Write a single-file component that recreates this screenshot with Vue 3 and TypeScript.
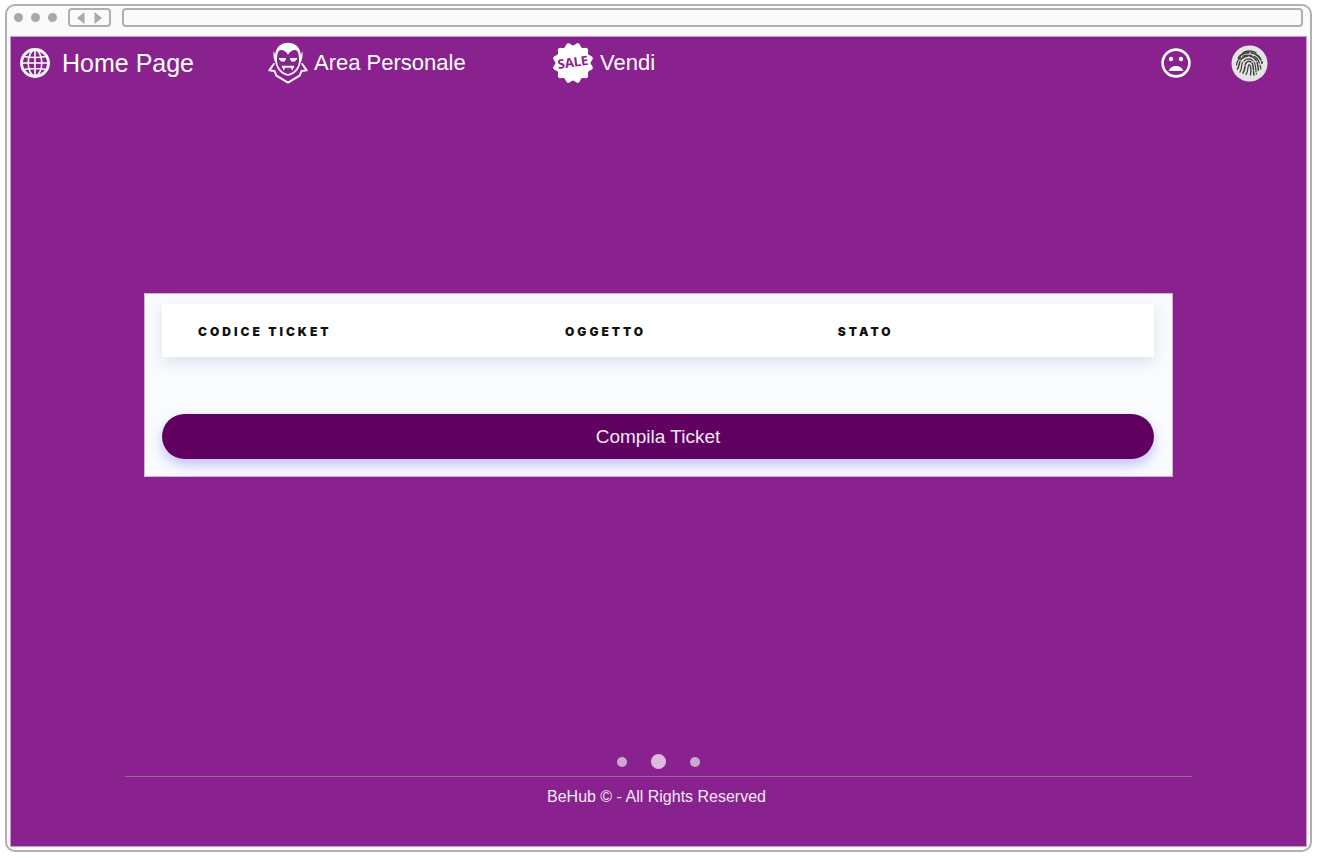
<script setup lang="ts">
import { ref } from 'vue'

const address = ref('')
const columns: string[] = ['Codice Ticket', 'Oggetto', 'Stato']
const slides: number[] = [1, 2, 3]
const current = ref(2)

function scallop(lobes: number, radius: number, depth: number, center: number): string {
  const steps = lobes * 12
  const points: string[] = []
  for (let i = 0; i < steps; i++) {
    const a = (i / steps) * Math.PI * 2
    const r = radius - depth * Math.cos(lobes * a)
    points.push(`${(center + r * Math.sin(a)).toFixed(2)} ${(center - r * Math.cos(a)).toFixed(2)}`)
  }
  return `M${points.join('L')}Z`
}

const badge = scallop(12, 19, 1.5, 21)
</script>

<template>
  <div class="screen">
    <div class="browser">
      <div class="chrome">
        <div class="lights"><span></span><span></span><span></span></div>
        <div class="history">
          <button type="button" aria-label="Back">
            <svg width="8" height="12" viewBox="0 0 8 12"><path d="M7.500 0V12L0 6Z" fill="#a9a9a9" /></svg>
          </button>
          <button type="button" aria-label="Forward">
            <svg width="8" height="12" viewBox="0 0 8 12"><path d="M.5 0V12L8 6Z" fill="#a9a9a9" /></svg>
          </button>
        </div>
        <input v-model="address" class="address" type="text" aria-label="Address" />
      </div>

      <div class="page">
        <header class="top">
          <nav class="nav">
            <a class="home" href="#">
              <svg width="30" height="30" viewBox="0 0 30 30" fill="none" stroke="#fff">
                <circle cx="15" cy="15" r="13.500" stroke-width="2.800" />
                <ellipse cx="15" cy="15" rx="6.800" ry="13" stroke-width="1.600" />
                <path d="M15 2V28M2 15H28M4 8.500Q15 10.500 26 8.500M4 21.500Q15 19.500 26 21.500" stroke-width="1.600" />
              </svg>
              <span>Home Page</span>
            </a>
            <a href="#">
              <svg width="40" height="42" viewBox="2 -2 124 126" preserveAspectRatio="none">
                <path d="M24 38C26 12 44 0 64 0S102 12 104 38L108 24Q112 42 103 60L98 50C98 30 94 24 87 22C76 22 68 28 64 37C60 28 52 22 41 22C34 24 30 30 30 50L25 60Q16 42 20 24Z" fill="#fff" />
                <g fill="none" stroke="#fff" stroke-linejoin="round" stroke-linecap="round">
                  <path d="M27 52C27 72 40 92 64 97C88 92 101 72 101 52" stroke-width="5" />
                  <path d="M20 64L6 83L22 85L28 99L64 120L100 99L106 85L122 83L108 64" stroke-width="6" />
                </g>
                <path d="M35 46H58Q57 57 48 57Q39 57 35 46ZM70 46H93Q89 57 80 57Q71 57 70 46Z" fill="#fff" />
                <path d="M45 69H83V75H81L77 84L73 75H55L51 84L47 75H45Z" fill="#fff" />
              </svg>
              <span>Area Personale</span>
            </a>
            <a href="#">
              <svg width="42" height="42" viewBox="0 0 42 42">
                <path :d="badge" fill="#fff" />
                <text x="21" y="25" text-anchor="middle" transform="rotate(-8 21 21)" class="sale">SALE</text>
              </svg>
              <span>Vendi</span>
            </a>
          </nav>
          <div class="tools">
            <button type="button" aria-label="Ticket">
              <svg width="30" height="30" viewBox="0 0 30 30">
                <circle cx="15" cy="15" r="13.400" fill="none" stroke="#fff" stroke-width="2.600" />
                <circle cx="10" cy="11" r="2.200" fill="#fff" />
                <circle cx="20" cy="11" r="2.200" fill="#fff" />
                <path d="M7.500 23C9 19.500 11.700 18 15 18S21 19.500 22.500 23Z" fill="#fff" />
              </svg>
            </button>
            <button type="button" aria-label="Login">
              <svg width="37" height="37" viewBox="0 0 37 37" fill="none" stroke="#3a3a3a" stroke-width="1.200" stroke-linecap="round">
                <circle cx="18.500" cy="18.500" r="18" fill="#e4e4e4" stroke="none" />
                <path d="M12 7.500Q18 4.500 25 7.500" stroke-width="1.300" />
                <path d="M7.500 13C11 7 21 6 26.500 10.500Q30 13.500 31 18" stroke-width="1.800" stroke-dasharray="12 2.500" />
                <path d="M5.500 20C6.500 10 19 7.500 25.500 13C29 17 29 21 30 24" stroke-dasharray="9 2.200" />
                <path d="M6.500 24C9 20 7.500 17 11 13.500C15 9.500 22 10.500 25 15C27.500 19 26.500 23 28 27" stroke-dasharray="8 2" stroke-width="1.500" />
                <path d="M9 27C12 21 9.500 19 12.500 16.500C15 13 20.500 13 23 17C25 20 24.500 25 25.500 29" stroke-dasharray="10 1.800" />
                <path d="M12 28C15 23 13 21 15 18C17 15.500 20 16 21.500 19C23 22 22 26 23 30" stroke-dasharray="7 1.800" stroke-width="1.500" />
                <path d="M15 29.500C18 25 16 22 18 19.500C19.500 20 20.500 24 19.500 30" />
              </svg>
            </button>
          </div>
        </header>

        <main class="content">
          <section class="panel">
            <table class="tickets">
              <thead>
                <tr><th v-for="column in columns" :key="column" scope="col">{{ column }}</th></tr>
              </thead>
            </table>
            <button type="button" class="compile">Compila Ticket</button>
          </section>
        </main>

        <div class="pager">
          <button
            v-for="slide in slides"
            :key="slide"
            type="button"
            :class="{ active: slide === current }"
            :aria-label="`Slide ${slide}`"
            @click="current = slide"
          ></button>
        </div>
        <footer class="foot">BeHub © - All Rights Reserved</footer>
      </div>
    </div>
  </div>
</template>

<style>
body {
  margin: 0;
  background: #fff;
}
</style>

<style scoped>
.screen {
  box-sizing: border-box;
  display: flex;
  min-height: 100vh;
  padding: 4px 12px 8px 5px;
  font-family: "Liberation Sans", Arial, sans-serif;
}
button {
  padding: 0;
  border: 0;
  background: none;
  font: inherit;
  cursor: pointer;
}
svg {
  display: block;
  flex: none;
}
.browser {
  box-sizing: border-box;
  flex: 1;
  display: flex;
  flex-direction: column;
  padding: 0 3px 3px;
  border: 2px solid #b0b0b0;
  border-radius: 10px;
  background: #fafafa;
}
.chrome {
  display: flex;
  align-items: flex-start;
  padding: 2px 4px 9px 4px;
}
.lights {
  display: flex;
  gap: 8px;
  padding-top: 5px;
  margin-right: 11px;
}
.lights span {
  width: 9px;
  height: 9px;
  border-radius: 50%;
  background: #a9a9a9;
}
.history {
  box-sizing: border-box;
  display: flex;
  align-items: center;
  justify-content: center;
  gap: 9px;
  width: 43px;
  height: 19px;
  margin-right: 11px;
  border: 2px solid #b0b0b0;
  border-radius: 4px;
}
.address {
  box-sizing: border-box;
  flex: 1;
  min-width: 0;
  height: 19px;
  padding: 0 6px;
  border: 2px solid #b0b0b0;
  border-radius: 4px;
  background: #fafafa;
  font: 12px "Liberation Sans", Arial, sans-serif;
  outline: none;
}
.page {
  flex: 1;
  display: flex;
  flex-direction: column;
  border: 1px solid #c79bcb;
  background: #89228f;
  color: #fff;
}
.top {
  display: flex;
  align-items: center;
  justify-content: space-between;
  height: 52px;
  padding: 0 38px 0 9px;
}
.nav {
  display: grid;
  grid-template-columns: 248px 284px auto;
  align-items: center;
}
.nav a {
  display: flex;
  align-items: center;
  gap: 6px;
  color: #fff;
  font-size: 22px;
  line-height: 30px;
  text-decoration: none;
}
.nav .home {
  gap: 12px;
  font-size: 25px;
}
.sale {
  font: 700 13px "Open Sans", sans-serif;
  fill: #89228f;
}
.tools {
  display: flex;
  align-items: center;
  gap: 40px;
}
.content {
  flex: 1;
  display: flex;
  align-items: center;
  padding: 0 133px 73px;
}
.panel {
  box-sizing: border-box;
  flex: 1;
  padding: 10px 18px 17px 17px;
  border: 1px solid #d3b1da;
  background: #f9fbff;
  overflow: hidden;
}
.tickets {
  width: 100%;
  height: 53px;
  margin-bottom: 57px;
  border-collapse: collapse;
  table-layout: fixed;
  background: #fff;
  box-shadow: 0 5px 14px rgba(90, 110, 150, 0.18);
}
.tickets th {
  box-sizing: border-box;
  padding: 2px 36px 0;
  color: #111;
  font: 900 12px/18px Inter, sans-serif;
  letter-spacing: 3px;
  text-align: left;
  text-transform: uppercase;
}
.tickets th:nth-child(1) {
  width: 37%;
}
.tickets th:nth-child(2) {
  width: 27.5%;
}
.compile {
  display: block;
  width: 100%;
  height: 45px;
  border-radius: 23px;
  background: #600060;
  box-shadow: 0 6px 12px rgba(108, 92, 240, 0.36);
  color: #f3e6f3;
  font-size: 19px;
}
.pager {
  display: flex;
  align-items: center;
  justify-content: center;
  gap: 24px;
  margin-bottom: 7px;
}
.pager button {
  width: 10px;
  height: 10px;
  border-radius: 50%;
  background: #cba8cf;
}
.pager .active {
  width: 15px;
  height: 15px;
  background: #dcb9df;
}
.foot {
  margin: 0 114px;
  padding: 11px 4px 40px 0;
  border-top: 1px solid #96659b;
  color: #f5e9f6;
  font-size: 16px;
  line-height: 18px;
  text-align: center;
}
</style>
